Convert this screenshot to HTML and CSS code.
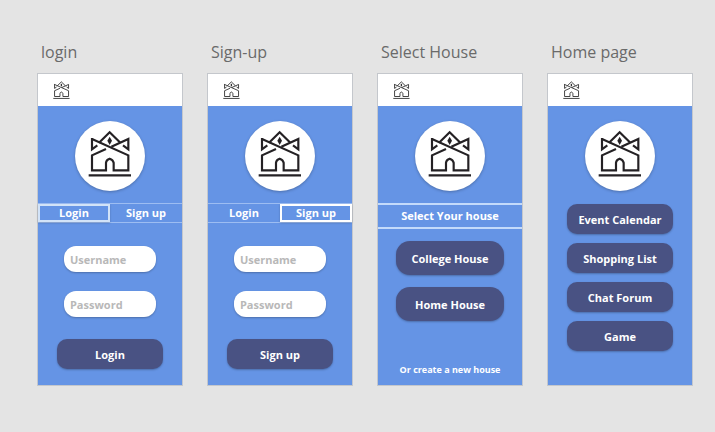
FILE: index.html
```html
<!DOCTYPE html>
<html lang="en">
<head>
<meta charset="utf-8">
<title>House app screens</title>
<link rel="stylesheet" href="styles.css">
</head>
<body>
<svg class="defs" aria-hidden="true">
  <symbol id="house" viewBox="54 45 132 156">
    <g fill="none" stroke="currentColor" stroke-width="6.5">
      <path d="M66 72L175 121V166H131V143Q129 134 119 131Q109 134 108 143V166H66V121L108 102"/>
      <path d="M124 95L175 72V103L159 91"/>
      <path d="M66 69V103L82 91"/>
      <path d="M87 83L119 52L151 83"/>
      <path d="M56 181H183"/>
    </g>
    <path fill="currentColor" d="M119 65L126 77L119 90L112 77Z"/>
  </symbol>
</svg>
<main class="board">
  <section class="artboard">
    <h2 class="title">login</h2>
    <div class="screen">
      <header class="bar"><svg class="mark"><use href="#house"/></svg></header>
      <div class="badge"><svg class="logo"><use href="#house"/></svg></div>
      <nav class="tabs"><button class="tab active dim">Login</button><button class="tab">Sign up</button></nav>
      <form class="form">
        <input class="field" type="text" placeholder="Username" aria-label="Username">
        <input class="field" type="password" placeholder="Password" aria-label="Password">
        <button class="btn submit" type="button">Login</button>
      </form>
    </div>
  </section>
  <section class="artboard">
    <h2 class="title">Sign-up</h2>
    <div class="screen">
      <header class="bar"><svg class="mark"><use href="#house"/></svg></header>
      <div class="badge"><svg class="logo"><use href="#house"/></svg></div>
      <nav class="tabs"><button class="tab">Login</button><button class="tab active">Sign up</button></nav>
      <form class="form">
        <input class="field" type="text" placeholder="Username" aria-label="Username">
        <input class="field" type="password" placeholder="Password" aria-label="Password">
        <button class="btn submit" type="button">Sign up</button>
      </form>
    </div>
  </section>
  <section class="artboard">
    <h2 class="title">Select House</h2>
    <div class="screen">
      <header class="bar"><svg class="mark"><use href="#house"/></svg></header>
      <div class="badge"><svg class="logo"><use href="#house"/></svg></div>
      <h3 class="heading">Select Your house</h3>
      <div class="houses">
        <button class="btn large">College House</button>
        <button class="btn large">Home House</button>
      </div>
      <a class="create" href="#">Or create a new house</a>
    </div>
  </section>
  <section class="artboard">
    <h2 class="title">Home page</h2>
    <div class="screen">
      <header class="bar"><svg class="mark"><use href="#house"/></svg></header>
      <div class="badge"><svg class="logo"><use href="#house"/></svg></div>
      <nav class="menu">
        <button class="btn">Event Calendar</button>
        <button class="btn">Shopping List</button>
        <button class="btn">Chat Forum</button>
        <button class="btn">Game</button>
      </nav>
    </div>
  </section>
</main>
</body>
</html>
```
FILE: styles.css
```css
* { box-sizing: border-box; }

body {
  margin: 0;
  background: #e4e4e4;
  font-family: "Open Sans", "Noto Sans", sans-serif;
  font-size: 11px;
  font-weight: 700;
}

button, input { font: inherit; }

.defs { position: absolute; width: 0; height: 0; }

.board {
  display: grid;
  grid-template-columns: repeat(4, 1fr);
  gap: 26px;
  padding: 40px 23px 46px 38px;
}

.artboard { display: flex; flex-direction: column; }

.title {
  margin: 0 0 10px;
  padding-left: 3px;
  color: #6a6a6a;
  font-size: 16px;
  font-weight: 400;
  line-height: 24px;
}

.screen {
  display: flex;
  flex-direction: column;
  min-height: 311px;
  background: #6594e5;
  box-shadow: 0 0 0 1px #c4c7cc;
}

.bar {
  display: flex;
  align-items: center;
  height: 32px;
  padding-left: 15px;
  background: #fff;
}

.mark { width: 17px; height: 20px; margin-top: 2px; color: #222; }

.badge {
  display: flex;
  align-items: center;
  justify-content: center;
  align-self: center;
  width: 70px;
  height: 70px;
  margin: 15px 0 12px;
  border-radius: 50%;
  background: #fff;
  box-shadow: 0 1px 3px rgba(0, 0, 0, .25);
}

.logo { width: 44px; height: 52px; color: #242124; }

.tabs {
  display: grid;
  grid-template-columns: 1fr 1fr;
  height: 20px;
  border: solid #9dbdf2;
  border-width: 1px 0;
}

.tab {
  padding: 0;
  border: 2px solid transparent;
  background: none;
  color: #fff;
  line-height: 14px;
}

.active { border-color: #fff; box-shadow: 0 1px 2px rgba(0, 0, 0, .2); }

.dim { border-color: #d2e3f8; }

.form {
  display: flex;
  flex-direction: column;
  align-items: center;
  padding-top: 23px;
}

.field {
  width: 64%;
  height: 26px;
  margin-bottom: 19px;
  padding: 0 6px;
  border: 0;
  border-radius: 12px;
  background: #fff;
  box-shadow: 0 1px 2px rgba(0, 0, 0, .25);
}

.field::placeholder { color: #b8b8b8; opacity: 1; }

.btn {
  width: 73%;
  height: 30px;
  padding: 0;
  border: 0;
  border-radius: 10px;
  background: #495283;
  color: #fff;
  box-shadow: 0 1px 2px rgba(0, 0, 0, .25);
}

.submit { margin-top: 3px; }

.heading {
  margin: 0;
  border: solid #c3dafb;
  border-width: 2px 0;
  color: #fff;
  font-size: 11px;
  line-height: 22px;
  text-align: center;
}

.houses {
  display: flex;
  flex-direction: column;
  align-items: center;
  gap: 12px;
  padding-top: 12px;
}

.large { width: 75%; height: 34px; border-radius: 14px; }

.create {
  margin: auto 0 8px;
  color: #fff;
  font-size: 9px;
  line-height: 14px;
  text-align: center;
  text-decoration: none;
}

.menu {
  display: flex;
  flex-direction: column;
  align-items: center;
  gap: 9px;
  padding-top: 1px;
}
```
